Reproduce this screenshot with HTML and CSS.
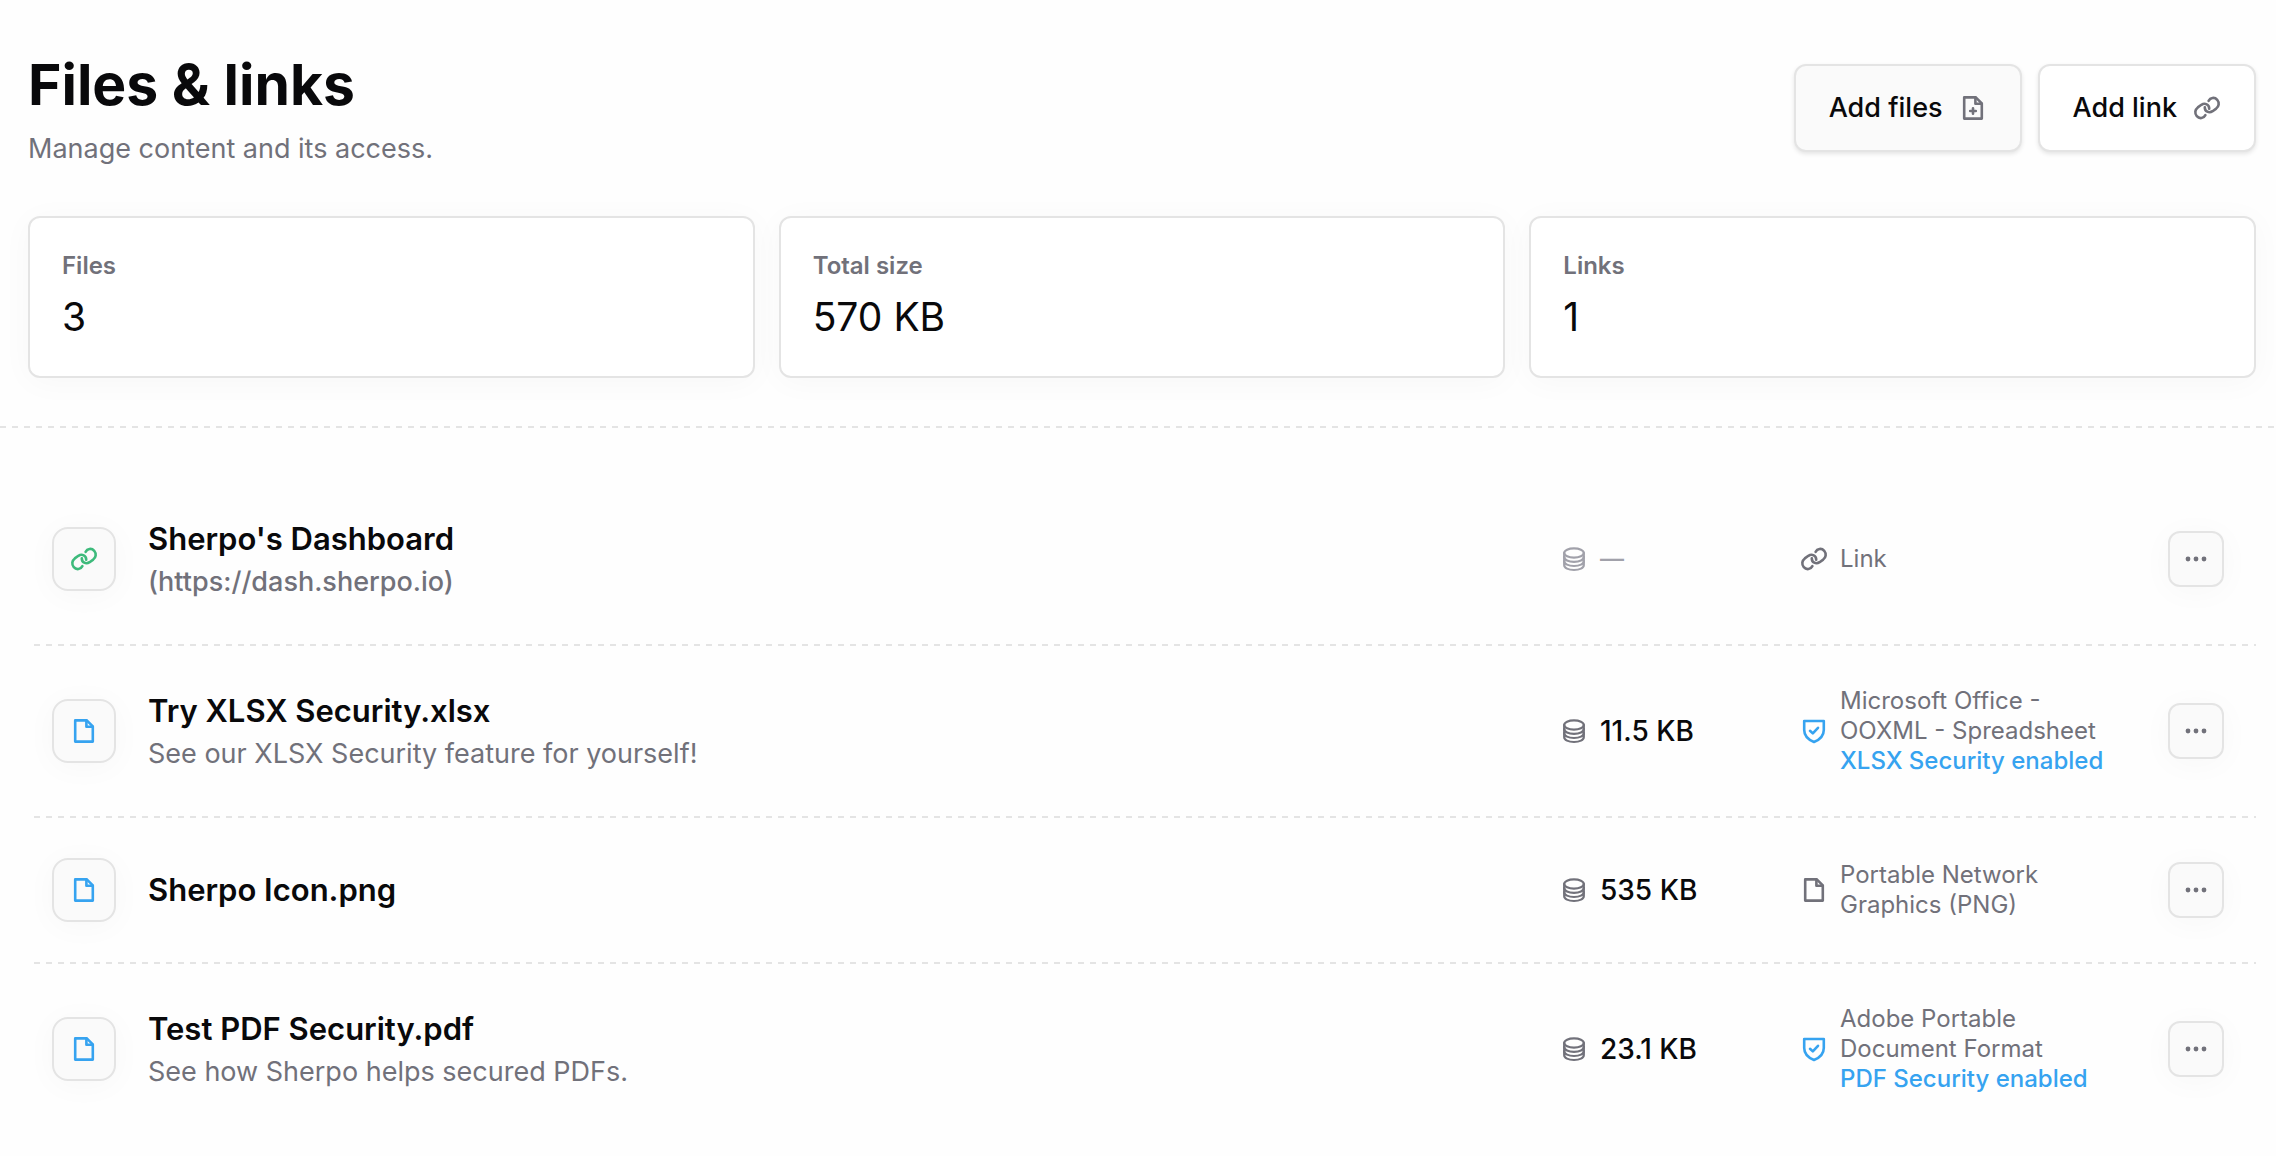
FILE: index.html
```html
<!DOCTYPE html>
<html lang="en">
<head>
    <meta charset="UTF-8">
    <meta name="viewport" content="width=device-width, initial-scale=1.0">
    <title>Files &amp; links</title>
    <link rel="stylesheet" href="styles.css">
</head>
<body>
    <!-- Icon sprite -->
    <svg class="sprite" aria-hidden="true">
        <symbol id="icon-link" viewBox="0 0 28 28">
            <path d="M12.4 21.2C10.8 24.4 6.4 25.2 3.8 22.2C1.4 19.2 2 15.6 4.8 13.4L8.4 10.8C12 8.4 16.4 10.6 16.2 14.8"/>
            <path d="M15.6 6.8C17.2 3.6 21.6 2.8 24.2 5.8C26.6 8.8 26 12.4 23.2 14.6L19.6 17.2C16 19.6 11.6 17.4 11.8 13.2"/>
        </symbol>
        <symbol id="icon-file" viewBox="0 0 28 28">
            <path d="M5.2 3.4H16.8L22.8 9.4V24.6H5.2Z"/>
            <path d="M16.4 3.6V9.8H22.6"/>
        </symbol>
        <symbol id="icon-file-plus" viewBox="0 0 28 28">
            <path d="M5.2 3.4H16.8L22.8 9.4V24.6H5.2Z"/>
            <path d="M16.4 3.6V9.8H22.6M14 14.2V19.8M11.2 17H16.8"/>
        </symbol>
        <symbol id="icon-database" viewBox="0 0 28 28">
            <g stroke-width="2.2">
                <ellipse cx="14" cy="8" rx="9.8" ry="4.6"/>
                <path d="M4.2 8V20C4.2 23 8.4 25 14 25S23.8 23 23.8 20V8"/>
                <path d="M4.2 11.8C4.2 14.8 8.4 16.8 14 16.8S23.8 14.8 23.8 11.8M4.2 16C4.2 19 8.4 21 14 21S23.8 19 23.8 16"/>
            </g>
        </symbol>
        <symbol id="icon-shield" viewBox="0 0 28 28">
            <path d="M4.2 4H23.8V13C23.8 18.6 20 22.6 14 25C8 22.6 4.2 18.6 4.2 13Z"/>
            <path d="M10 13.8L12.8 16.4L18 10.8"/>
        </symbol>
        <symbol id="icon-dots" viewBox="0 0 28 28">
            <g fill="currentColor" stroke="none">
                <circle cx="6" cy="14" r="2.4"/>
                <circle cx="14" cy="14" r="2.4"/>
                <circle cx="22" cy="14" r="2.4"/>
            </g>
        </symbol>
    </svg>

    <header class="page-header">
        <div>
            <h1>Files &amp; links</h1>
            <p class="subtitle">Manage content and its access.</p>
        </div>
        <div class="actions">
            <button type="button" class="btn btn-active">Add files <svg class="icon"><use href="#icon-file-plus"/></svg></button>
            <button type="button" class="btn">Add link <svg class="icon"><use href="#icon-link"/></svg></button>
        </div>
    </header>

    <dl class="stats">
        <div class="stat">
            <dt>Files</dt>
            <dd>3</dd>
        </div>
        <div class="stat">
            <dt>Total size</dt>
            <dd>570 KB</dd>
        </div>
        <div class="stat">
            <dt>Links</dt>
            <dd>1</dd>
        </div>
    </dl>

    <ul class="file-list">
        <li class="file">
            <span class="file-icon link"><svg class="icon"><use href="#icon-link"/></svg></span>
            <div class="file-info">
                <h2>Sherpo's Dashboard</h2>
                <p class="url">(https://dash.sherpo.io)</p>
            </div>
            <div class="file-size empty"><svg class="icon"><use href="#icon-database"/></svg> —</div>
            <div class="file-type"><svg class="icon"><use href="#icon-link"/></svg> <p>Link</p></div>
            <button type="button" class="menu" aria-label="More options"><svg class="icon"><use href="#icon-dots"/></svg></button>
        </li>
        <li class="file">
            <span class="file-icon"><svg class="icon"><use href="#icon-file"/></svg></span>
            <div class="file-info">
                <h2>Try XLSX Security.xlsx</h2>
                <p>See our XLSX Security feature for yourself!</p>
            </div>
            <div class="file-size"><svg class="icon"><use href="#icon-database"/></svg> 11.5 KB</div>
            <div class="file-type secure"><svg class="icon"><use href="#icon-shield"/></svg> <p>Microsoft Office - OOXML - Spreadsheet <strong>XLSX Security enabled</strong></p></div>
            <button type="button" class="menu" aria-label="More options"><svg class="icon"><use href="#icon-dots"/></svg></button>
        </li>
        <li class="file">
            <span class="file-icon"><svg class="icon"><use href="#icon-file"/></svg></span>
            <div class="file-info">
                <h2>Sherpo Icon.png</h2>
            </div>
            <div class="file-size"><svg class="icon"><use href="#icon-database"/></svg> 535 KB</div>
            <div class="file-type"><svg class="icon"><use href="#icon-file"/></svg> <p>Portable Network Graphics (PNG)</p></div>
            <button type="button" class="menu" aria-label="More options"><svg class="icon"><use href="#icon-dots"/></svg></button>
        </li>
        <li class="file">
            <span class="file-icon"><svg class="icon"><use href="#icon-file"/></svg></span>
            <div class="file-info">
                <h2>Test PDF Security.pdf</h2>
                <p>See how Sherpo helps secured PDFs.</p>
            </div>
            <div class="file-size"><svg class="icon"><use href="#icon-database"/></svg> 23.1 KB</div>
            <div class="file-type secure"><svg class="icon"><use href="#icon-shield"/></svg> <p>Adobe Portable Document Format <strong>PDF Security enabled</strong></p></div>
            <button type="button" class="menu" aria-label="More options"><svg class="icon"><use href="#icon-dots"/></svg></button>
        </li>
    </ul>
</body>
</html>
```
FILE: styles.css
```css
* {
    box-sizing: border-box;
    margin: 0;
    padding: 0;
}

body {
    font-family: Inter, sans-serif;
    font-size: 27px;
    line-height: 40px;
    color: #09090b;
    background-color: #fefefe;
}

.sprite {
    position: absolute;
    width: 0;
    height: 0;
}

.icon {
    flex: none;
    width: 28px;
    height: 28px;
    fill: none;
    stroke: currentColor;
    stroke-width: 2.6;
    stroke-linecap: round;
    stroke-linejoin: round;
}

/* Header */
.page-header {
    display: flex;
    justify-content: space-between;
    align-items: flex-start;
    padding: 48px 20px 0 28px;
}

h1 {
    font-size: 57px;
    line-height: 74px;
    font-weight: 700;
}

.subtitle {
    margin-top: 7px;
    color: #71717a;
}

.actions {
    display: flex;
    gap: 16px;
    margin-top: 16px;
}

.btn {
    display: flex;
    align-items: center;
    gap: 16px;
    height: 88px;
    padding: 0 33px;
    font: inherit;
    font-weight: 500;
    color: inherit;
    background-color: #fff;
    border: 2px solid #e4e4e4;
    border-radius: 12px;
    box-shadow: 0 2px 4px rgba(0, 0, 0, 0.1);
    cursor: pointer;
}

.btn-active {
    background-color: #fafafa;
}

.btn .icon {
    color: #71717a;
}

/* Summary cards */
.stats {
    display: grid;
    grid-template-columns: repeat(3, 1fr);
    gap: 24px;
    padding: 47px 20px 48px 28px;
}

.stat {
    padding: 32px;
    background-color: #fff;
    border: 2px solid #e4e4e4;
    border-radius: 12px;
    box-shadow: 0 4px 32px rgba(0, 0, 0, 0.03);
}

.stat dt {
    font-size: 24px;
    line-height: 32px;
    font-weight: 600;
    color: #71717a;
}

.stat dd {
    margin-top: 8px;
    font-size: 39px;
    line-height: 54px;
}

/* File list */
.file-list {
    padding: 48px 20px 20px 28px;
    list-style: none;
    background: repeating-linear-gradient(90deg, #e4e4e4 0 6px, transparent 6px 12px) top / 100% 2px no-repeat;
}

.file {
    display: grid;
    grid-template-columns: 64px 1fr 208px 336px 56px;
    align-items: center;
    column-gap: 32px;
    padding: 40px 32px 40px 24px;
}

.file + .file {
    padding-top: 42px;
    background: repeating-linear-gradient(90deg, transparent 0 6px, #e4e4e4 6px 12px) top / 100% 2px no-repeat;
}

.file-icon,
.menu {
    display: flex;
    justify-content: center;
    align-items: center;
    background-color: #fafafa;
    border: 2px solid #e4e4e4;
    box-shadow: 0 4px 32px rgba(0, 0, 0, 0.03);
}

.file-icon {
    width: 64px;
    height: 64px;
    color: #36a3f0;
    border-radius: 16px;
}

.file-icon.link {
    color: #3dba7b;
}

.file-info {
    padding: 2px 0;
    color: #71717a;
}

.file-info h2 {
    font-size: 31px;
    line-height: 46px;
    font-weight: 600;
    color: #09090b;
}

.file-info .url {
    font-weight: 500;
}

.file-size {
    display: flex;
    align-items: center;
    gap: 12px;
    font-size: 28px;
    font-weight: 500;
}

.file-size .icon {
    color: #71717a;
}

.file-size.empty,
.file-size.empty .icon {
    color: #a1a1aa;
}

.file-size.empty {
    font-size: 24px;
}

.file-type {
    display: flex;
    align-items: center;
    gap: 12px;
    padding-right: 24px;
    font-size: 24px;
    line-height: 30px;
    color: #71717a;
}

.file-type strong {
    display: block;
    font-weight: 500;
    color: #36a3f0;
}

.secure .icon {
    color: #36a3f0;
}

.menu {
    width: 56px;
    height: 56px;
    color: #71717a;
    border-radius: 12px;
    cursor: pointer;
}
```
